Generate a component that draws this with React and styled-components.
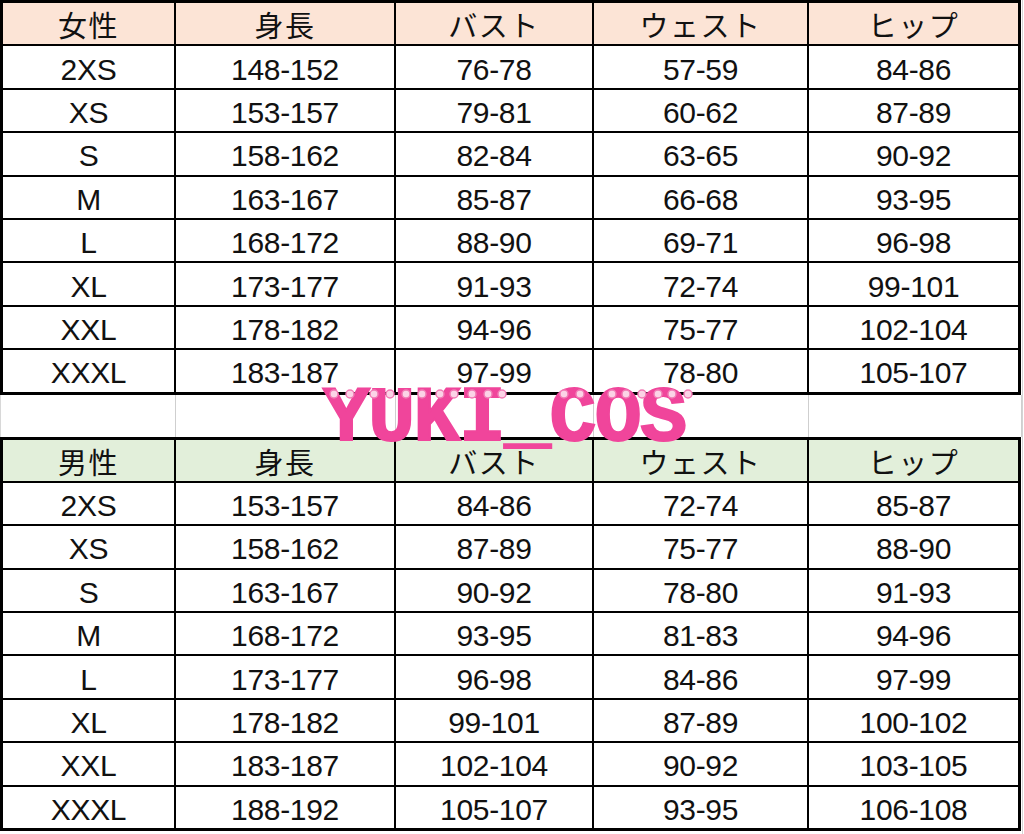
import React from 'react';
import styled, { createGlobalStyle } from 'styled-components';

const GlobalStyle = createGlobalStyle`
  html, body {
    margin: 0;
    padding: 0;
    background: #ffffff;
  }
  body {
    font-family: "Liberation Sans", "Noto Sans CJK JP", Arial, sans-serif;
    color: #111;
  }
`;

const COLS = '171px 218px 196px 213px 209px';

const Page = styled.div`
  position: relative;
  width: 1022px;
  height: 834px;
  border-right: 1px solid #d4d4d4;
  display: flex;
  flex-direction: column;
`;

const Sheet = styled.div`
  width: 1021px;
  box-sizing: border-box;
  display: grid;
  grid-template-columns: ${COLS};
  grid-auto-rows: 41.4px;
  gap: 2px;
  padding: 3px;
  background: #000;
`;

const Cell = styled.div`
  display: flex;
  align-items: center;
  justify-content: center;
  background: ${(p) => p.$bg || '#ffffff'};
  font-size: 30px;
  line-height: 1;
  letter-spacing: -0.3px;
  padding-top: 5px;
  box-sizing: border-box;
  white-space: nowrap;
`;

const HeadCell = styled(Cell)`
  font-family: "Noto Sans CJK JP", "Liberation Sans", sans-serif;
  font-size: 29px;
  font-weight: 400;
  letter-spacing: 1.5px;
  padding-top: 2px;
`;

const Spacer = styled.div`
  width: 1021px;
  height: 42px;
  box-sizing: border-box;
  display: grid;
  grid-template-columns: 175px 220px 198px 215px 213px;
  border-left: 1px solid #d8d8d8;
`;

const SpacerCell = styled.div`
  border-right: 1px solid #cfcfcf;
`;

const Watermark = styled.div`
  position: absolute;
  left: 323px;
  top: 380px;
  font-family: "Liberation Mono", "DejaVu Sans Mono", monospace;
  font-weight: 700;
  font-size: 78px;
  line-height: 1;
  letter-spacing: -1.5px;
  color: #f0459b;
  -webkit-text-stroke: 2px #f0459b;
  pointer-events: none;
`;

const Dots = styled.svg`
  position: absolute;
  left: 0;
  top: 0;
  overflow: visible;
`;

const headers = ['身長', 'バスト', 'ウェスト', 'ヒップ'];

const women = [
  ['2XS', '148-152', '76-78', '57-59', '84-86'],
  ['XS', '153-157', '79-81', '60-62', '87-89'],
  ['S', '158-162', '82-84', '63-65', '90-92'],
  ['M', '163-167', '85-87', '66-68', '93-95'],
  ['L', '168-172', '88-90', '69-71', '96-98'],
  ['XL', '173-177', '91-93', '72-74', '99-101'],
  ['XXL', '178-182', '94-96', '75-77', '102-104'],
  ['XXXL', '183-187', '97-99', '78-80', '105-107'],
];

const men = [
  ['2XS', '153-157', '84-86', '72-74', '85-87'],
  ['XS', '158-162', '87-89', '75-77', '88-90'],
  ['S', '163-167', '90-92', '78-80', '91-93'],
  ['M', '168-172', '93-95', '81-83', '94-96'],
  ['L', '173-177', '96-98', '84-86', '97-99'],
  ['XL', '178-182', '99-101', '87-89', '100-102'],
  ['XXL', '183-187', '102-104', '90-92', '103-105'],
  ['XXXL', '188-192', '105-107', '93-95', '106-108'],
];

// little rings on the watermark letters
const dotXs = [8, 24, 48, 64, 80, 96, 114, 128, 146, 162, 176, 238, 254, 286, 300, 316, 332, 346, 362];

const SizeTable = ({ label, color, rows }) => (
  <Sheet>
    <HeadCell $bg={color}>{label}</HeadCell>
    {headers.map((h) => (
      <HeadCell key={h} $bg={color}>{h}</HeadCell>
    ))}
    {rows.map((row) =>
      row.map((v, i) => <Cell key={row[0] + i}>{v}</Cell>)
    )}
  </Sheet>
);

export default function App() {
  return (
    <>
      <GlobalStyle />
      <Page>
        <SizeTable label="女性" color="#fce4d6" rows={women} />
        <Spacer>
          {[0, 1, 2, 3, 4].map((i) => (
            <SpacerCell key={i} />
          ))}
        </Spacer>
        <SizeTable label="男性" color="#e2efda" rows={men} />
        <Watermark>
          YUKI_COS
          <Dots width="370" height="30">
            {dotXs.map((x) => (
              <circle key={x} cx={x + 3} cy="14" r="4" fill="#fbd3e6" stroke="#f27bb5" strokeWidth="1.5" />
            ))}
          </Dots>
        </Watermark>
      </Page>
    </>
  );
}
